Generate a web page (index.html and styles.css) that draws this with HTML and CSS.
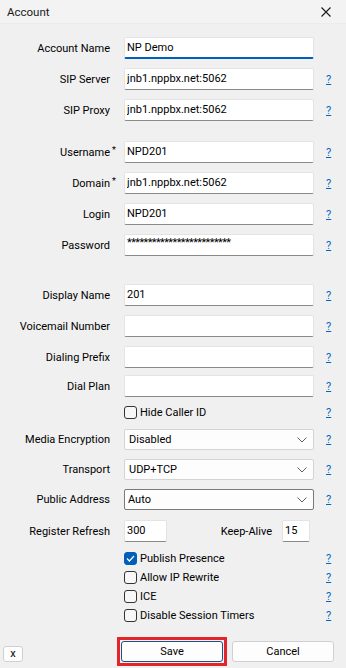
FILE: index.html
```html
<!DOCTYPE html>
<html lang="en">

<head>
    <meta charset="UTF-8">
    <meta name="viewport" content="width=device-width, initial-scale=1.0">
    <title>Account</title>
    <link rel="stylesheet" href="styles.css">
</head>

<body>
    <div class="window">
        <header class="titlebar">
            <span class="title">Account</span>
            <svg class="close" width="10" height="10" viewBox="0 0 10 10">
                <path d="M0.5 0.5 L9.5 9.5 M9.5 0.5 L0.5 9.5" stroke="#1a1a1a" stroke-width="1.1" fill="none" />
            </svg>
        </header>

        <form class="form">
            <div class="row">
                <label class="lbl">Account Name</label>
                <input class="field focused" type="text" value="NP Demo">
            </div>
            <div class="row">
                <label class="lbl">SIP Server</label>
                <input class="field" type="text" value="jnb1.nppbx.net:5062">
                <a class="help" href="#">?</a>
            </div>
            <div class="row">
                <label class="lbl">SIP Proxy</label>
                <input class="field" type="text" value="jnb1.nppbx.net:5062">
                <a class="help" href="#">?</a>
            </div>

            <div class="row sep-sm">
                <label class="lbl">Username<span class="req">*</span></label>
                <input class="field" type="text" value="NPD201">
                <a class="help" href="#">?</a>
            </div>
            <div class="row">
                <label class="lbl">Domain<span class="req">*</span></label>
                <input class="field" type="text" value="jnb1.nppbx.net:5062">
                <a class="help" href="#">?</a>
            </div>
            <div class="row">
                <label class="lbl">Login</label>
                <input class="field" type="text" value="NPD201">
                <a class="help" href="#">?</a>
            </div>
            <div class="row">
                <label class="lbl">Password</label>
                <input class="field pass" type="text" value="*************************">
                <a class="help" href="#">?</a>
            </div>

            <div class="row sep-lg">
                <label class="lbl">Display Name</label>
                <input class="field" type="text" value="201">
                <a class="help" href="#">?</a>
            </div>
            <div class="row">
                <label class="lbl">Voicemail Number</label>
                <input class="field" type="text" value="">
                <a class="help" href="#">?</a>
            </div>
            <div class="row">
                <label class="lbl">Dialing Prefix</label>
                <input class="field" type="text" value="">
                <a class="help" href="#">?</a>
            </div>
            <div class="row tight">
                <label class="lbl">Dial Plan</label>
                <input class="field" type="text" value="">
                <a class="help" href="#">?</a>
            </div>
            <div class="row check-row first-check">
                <span></span>
                <label class="check"><span class="box"></span>Hide Caller ID</label>
                <a class="help" href="#">?</a>
            </div>

            <div class="row select-row">
                <label class="lbl">Media Encryption</label>
                <div class="select">
                    <span>Disabled</span>
                    <svg width="10" height="6" viewBox="0 0 10 6"><path d="M0.5 0.5 L5 5 L9.5 0.5" stroke="#606060" fill="none" /></svg>
                </div>
                <a class="help" href="#">?</a>
            </div>
            <div class="row select-row">
                <label class="lbl">Transport</label>
                <div class="select">
                    <span>UDP+TCP</span>
                    <svg width="10" height="6" viewBox="0 0 10 6"><path d="M0.5 0.5 L5 5 L9.5 0.5" stroke="#606060" fill="none" /></svg>
                </div>
                <a class="help" href="#">?</a>
            </div>
            <div class="row select-row last-select">
                <label class="lbl">Public Address</label>
                <div class="select hover">
                    <span>Auto</span>
                    <svg width="10" height="6" viewBox="0 0 10 6"><path d="M0.5 0.5 L5 5 L9.5 0.5" stroke="#606060" fill="none" /></svg>
                </div>
                <a class="help" href="#">?</a>
            </div>

            <div class="row refresh-row">
                <label class="lbl">Register Refresh</label>
                <div class="pair">
                    <input class="field small" type="text" value="300">
                    <label class="lbl inline">Keep-Alive</label>
                    <input class="field tiny" type="text" value="15">
                </div>
            </div>

            <div class="row check-row group-check">
                <span></span>
                <label class="check"><span class="box checked"><svg width="9" height="7" viewBox="0 0 9 7"><path d="M1 3.5 L3.4 6 L8 1" stroke="#fff" stroke-width="1.2" fill="none" /></svg></span>Publish Presence</label>
                <a class="help" href="#">?</a>
            </div>
            <div class="row check-row">
                <span></span>
                <label class="check"><span class="box"></span>Allow IP Rewrite</label>
                <a class="help" href="#">?</a>
            </div>
            <div class="row check-row">
                <span></span>
                <label class="check"><span class="box"></span>ICE</label>
                <a class="help" href="#">?</a>
            </div>
            <div class="row check-row">
                <span></span>
                <label class="check"><span class="box"></span>Disable Session Timers</label>
                <a class="help" href="#">?</a>
            </div>
        </form>

        <div class="actions">
            <button class="btn btn-x" type="button">x</button>
            <span class="hilite">
                <button class="btn btn-save" type="button">Save</button>
            </span>
            <button class="btn btn-cancel" type="button">Cancel</button>
        </div>
    </div>
</body>

</html>
```

FILE: styles.css
```css
body {
    margin: 0;
    font-family: Roboto, "Liberation Sans", sans-serif;
    font-size: 11px;
    color: #000;
    background-color: #f0f0f0;
}

.window {
    width: 346px;
    height: 668px;
    overflow: hidden;
}

.titlebar {
    height: 24px;
    background-color: #f3f3f3;
    border-bottom: 1px solid #ebebeb;
    display: flex;
    align-items: center;
    justify-content: space-between;
    padding: 0 15px 0 7px;
    box-sizing: border-box;
}

.title {
    font-size: 11.5px;
    color: #1a1a1a;
}

.close {
    display: block;
}

/* form rows: flex column so margins add up instead of collapsing */
.form {
    display: flex;
    flex-direction: column;
    padding-top: 13px;
}

.row {
    display: grid;
    grid-template-columns: 110px 190px 20px;
    column-gap: 14px;
    align-items: center;
    height: 22px;
    margin-bottom: 9px;
}

.row .help {
    margin-left: -2px;
}

.sep-sm {
    margin-top: 11px;
}

.sep-lg {
    margin-top: 19px;
}

.tight {
    margin-top: -2px;
}

.lbl {
    text-align: right;
    position: relative;
    white-space: nowrap;
}

.lbl .req {
    position: absolute;
    left: 100%;
    top: -1px;
    margin-left: 2px;
    font-size: 9px;
}

.field {
    box-sizing: border-box;
    width: 100%;
    height: 22px;
    margin: 0;
    padding: 0 0 1px 2px;
    font-family: inherit;
    font-size: 11px;
    color: #000;
    background-color: #fff;
    border: 1px solid #e3e3e3;
    border-bottom-color: #8a8a8a;
    border-radius: 2px;
    outline: none;
}

.field.focused {
    border-bottom: 2px solid #005fb8;
}

.field.pass {
    letter-spacing: -0.6px;
    padding-bottom: 5px;
}

.help {
    color: #0067c0;
    text-decoration: underline;
    font-size: 11px;
}

/* check boxes */
.check-row {
    height: 19px;
    margin-bottom: 0;
}

.first-check {
    margin-top: -3px;
    margin-bottom: 7px;
}

.group-check {
    margin-top: 7px;
}

.check {
    display: flex;
    align-items: center;
    white-space: nowrap;
}

.box {
    box-sizing: border-box;
    width: 13px;
    height: 13px;
    border: 1px solid #333;
    border-radius: 3px;
    background-color: #f7f7f7;
    margin-right: 3px;
    display: flex;
    align-items: center;
    justify-content: center;
}

.box.checked {
    background-color: #005fb8;
    border-color: #005fb8;
}

/* drop downs */
.select-row {
    height: 21px;
}

.last-select {
    margin-bottom: 10px;
}

.select {
    box-sizing: border-box;
    height: 21px;
    background-color: #fdfdfd;
    border: 1px solid #d4d4d4;
    border-radius: 2px;
    display: flex;
    align-items: center;
    justify-content: space-between;
    padding: 0 6px 0 4px;
}

.select.hover {
    border-color: #7a7a7a;
    padding-left: 3px;
}

.refresh-row {
    margin-bottom: 0;
}

.pair {
    display: flex;
    align-items: center;
    padding-right: 4px;
}

.field.small {
    width: 43px;
}

.field.tiny {
    width: 28px;
}

.lbl.inline {
    margin-left: auto;
    margin-right: 10px;
}

/* buttons */
.actions {
    display: flex;
    align-items: center;
    margin-top: 12px;
}

.btn {
    box-sizing: border-box;
    font-family: inherit;
    font-size: 11px;
    color: #000;
    background-color: #fdfdfd;
    border: 1px solid #d0d0d0;
    border-radius: 3px;
    padding: 0;
}

.btn-x {
    width: 20px;
    height: 16px;
    margin-left: 3px;
    align-self: flex-end;
    margin-bottom: 4px;
    line-height: 12px;
}

.hilite {
    display: flex;
    padding: 1px;
    border: 3px solid #e3242b;
    margin-left: 94px;
}

.btn-save {
    width: 102px;
    height: 21px;
    border-color: #1d4f86;
}

.btn-cancel {
    width: 102px;
    height: 21px;
    margin-left: 5px;
}
```
